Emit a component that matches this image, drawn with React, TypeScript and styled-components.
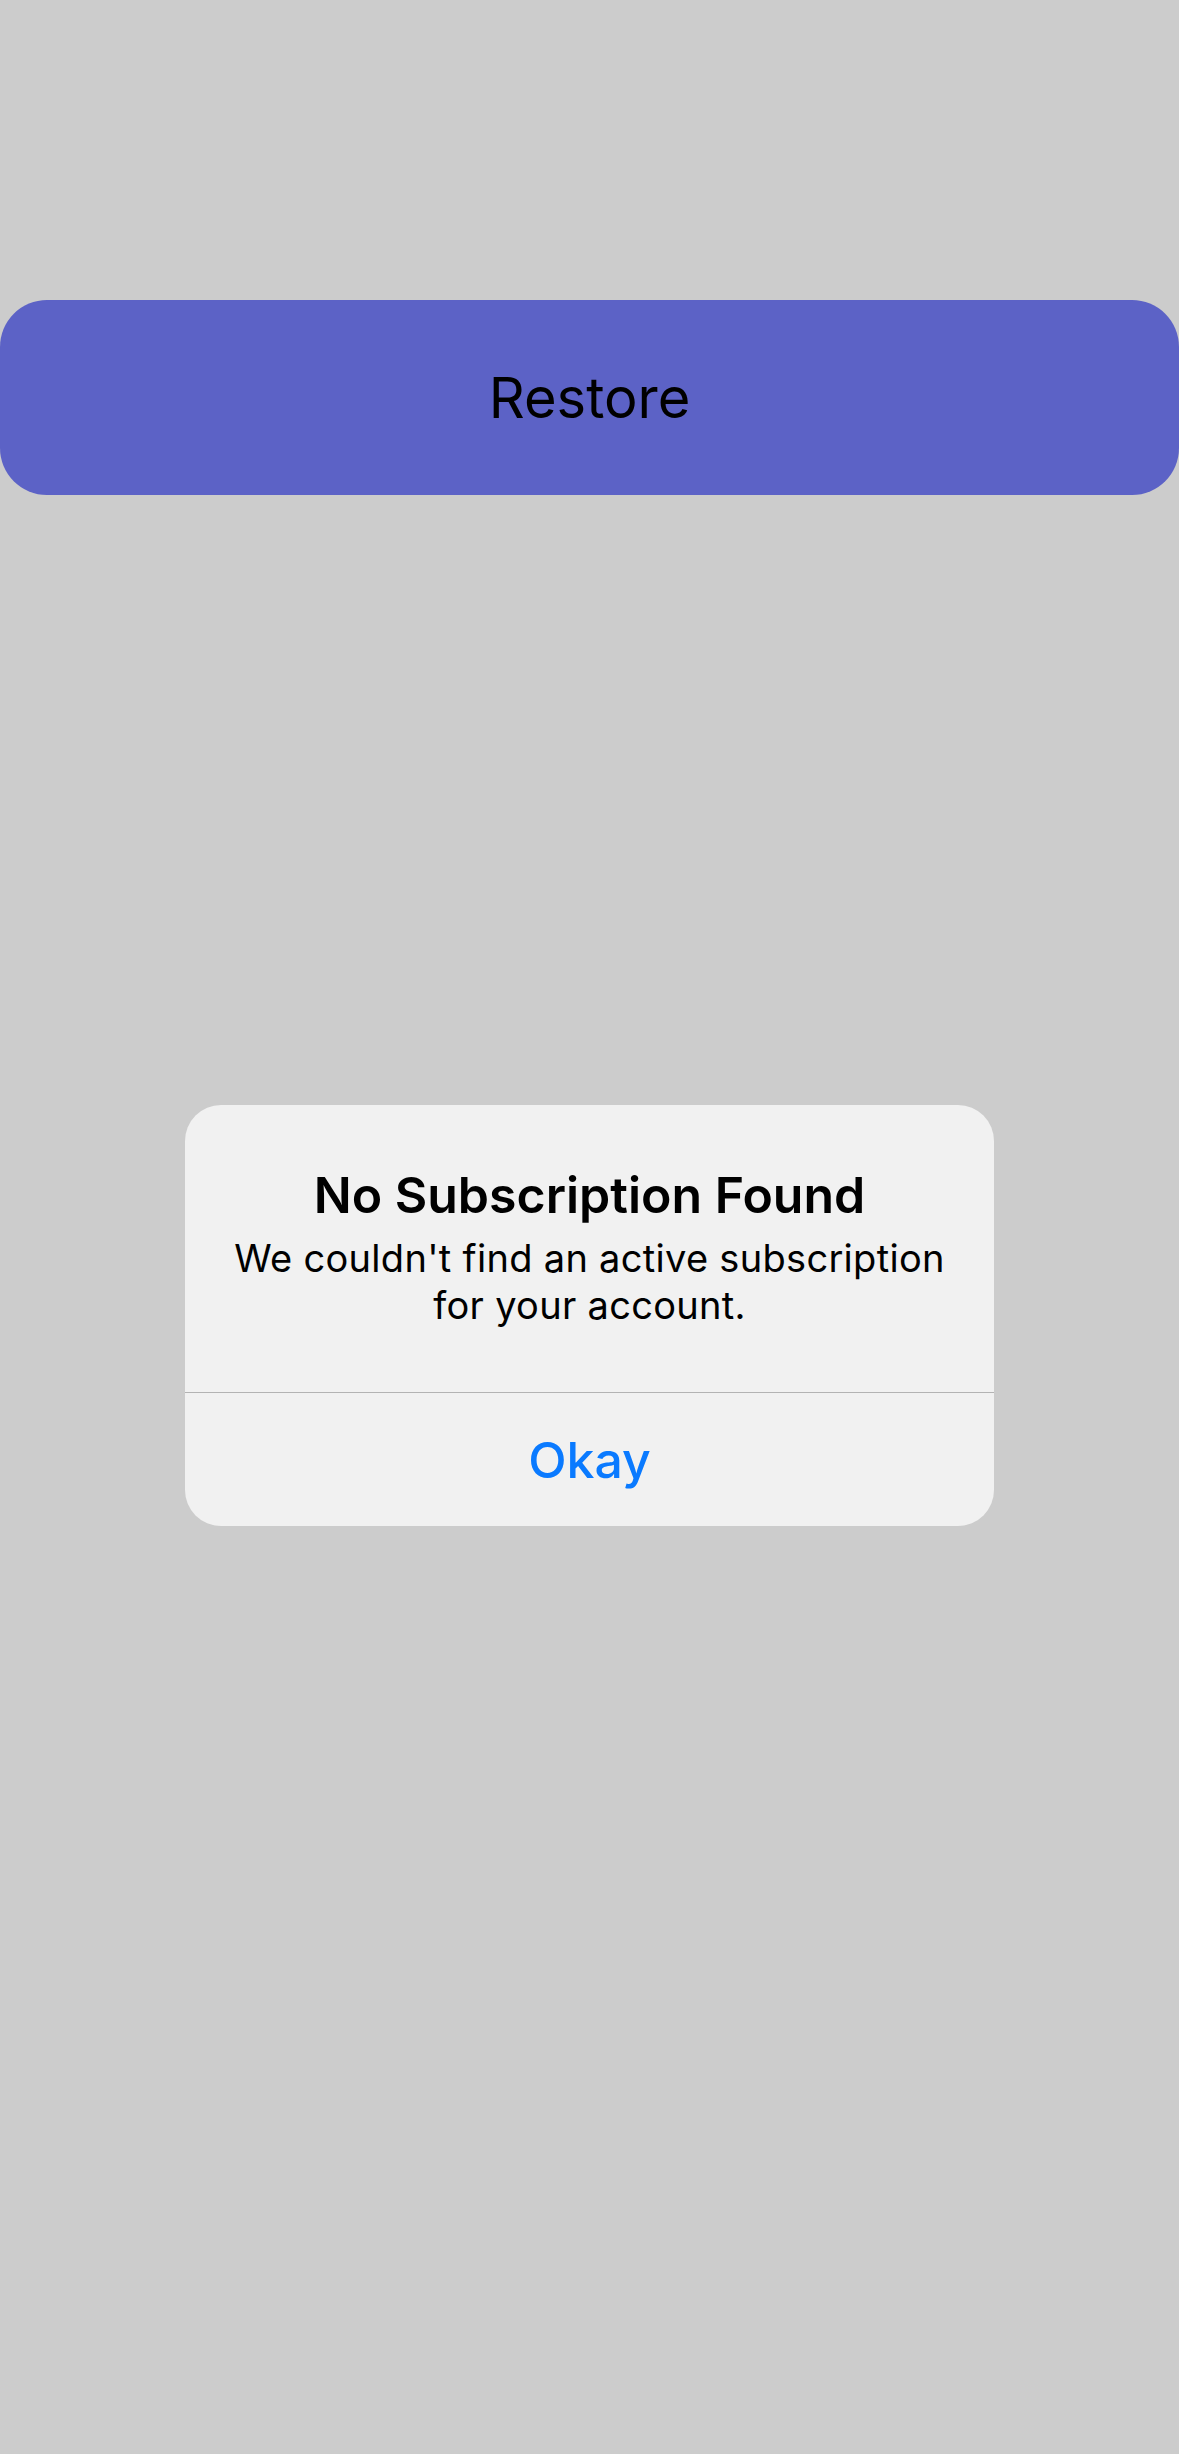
import React from 'react'
import styled, { createGlobalStyle } from 'styled-components'

const GlobalStyle = createGlobalStyle`
  html, body {
    margin: 0;
    padding: 0;
    background: #cccccc;
  }
  body {
    font-family: Inter, "Liberation Sans", Arial, sans-serif;
    -webkit-font-smoothing: antialiased;
  }
`

const Screen = styled.main`
  position: relative;
  width: 1179px;
  height: 2454px;
  padding-top: 300px;
  box-sizing: border-box;
  background: #cccccc;
`

const RestoreButton = styled.button`
  display: flex;
  align-items: center;
  justify-content: center;
  width: 100%;
  height: 195px;
  border: 0;
  border-radius: 47px;
  background: #5c62c6;
  color: #000;
  font-family: Inter, "Liberation Sans", Arial, sans-serif;
  font-size: 56px;
  font-weight: 400;
  padding: 0;
`

const Overlay = styled.div`
  position: absolute;
  inset: 0;
  display: flex;
  justify-content: center;
  align-items: flex-start;
  padding-top: 1105px;
  box-sizing: border-box;
`

const Alert = styled.div`
  width: 809px;
  background: #f1f1f1;
  border-radius: 36px;
  overflow: hidden;
  display: flex;
  flex-direction: column;
`

const AlertBody = styled.div`
  height: 288px;
  box-sizing: border-box;
  padding: 60px 30px 0;
  text-align: center;
  border-bottom: 1px solid #b3b3b3;
`

const Title = styled.h2`
  margin: 0;
  font-size: 50px;
  line-height: 60px;
  font-weight: 600;
  color: #000;
`

const Message = styled.p`
  margin: 10px 0 0;
  font-size: 38px;
  line-height: 47px;
  font-weight: 400;
  letter-spacing: 0.3px;
  color: #000;
`

const AlertAction = styled.button`
  height: 133px;
  border: 0;
  background: transparent;
  color: #0a7aff;
  font-family: Inter, "Liberation Sans", Arial, sans-serif;
  font-size: 50px;
  font-weight: 500;
  padding: 0;
`

export default function App() {
  return (
    <>
      <GlobalStyle />
      <Screen>
        <RestoreButton>Restore</RestoreButton>
        <Overlay>
          <Alert>
            <AlertBody>
              <Title>No Subscription Found</Title>
              <Message>We couldn't find an active subscription for your account.</Message>
            </AlertBody>
            <AlertAction>Okay</AlertAction>
          </Alert>
        </Overlay>
      </Screen>
    </>
  )
}
